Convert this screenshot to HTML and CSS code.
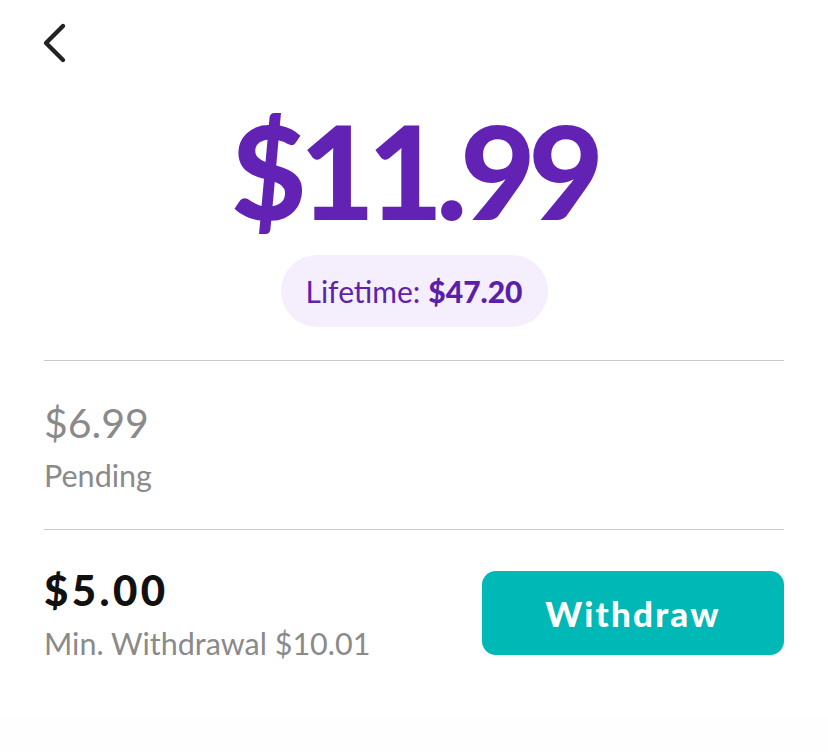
FILE: index.html
```html
<!DOCTYPE html>
<html>
<head>
<meta charset="utf-8">
<link rel="stylesheet" href="styles.css">
</head>
<body>
<div class="card">
  <div class="topbar">
    <svg class="back" width="40" height="48" viewBox="0 0 40 48">
      <path d="M23 6 L6 23 L23 40" fill="none" stroke="#222" stroke-width="4.4" stroke-linecap="round" stroke-linejoin="round"/>
    </svg>
  </div>
  <div class="balance">$11.99</div>
  <div class="pill-row">
    <div class="pill">Lifetime: <b>$47.20</b></div>
  </div>
  <div class="divider"></div>
  <div class="pending">
    <div class="pending-amount">$6.99</div>
    <div class="pending-label">Pending</div>
  </div>
  <div class="divider"></div>
  <div class="withdraw-row">
    <div class="avail">
      <div class="avail-amount">$5.00</div>
      <div class="avail-label">Min. Withdrawal $10.01</div>
    </div>
    <button class="btn">Withdraw</button>
  </div>
</div>
</body>
</html>
```
FILE: styles.css
```css
html, body {
  margin: 0;
  padding: 0;
  background: #fefefe;
}
body {
  font-family: "Lato", sans-serif;
}
.card {
  background: #fff;
  height: 716px;
  box-sizing: border-box;
  padding: 0 44px;
  box-shadow: 0 2px 4px rgba(0,0,0,0.08);
}
.topbar {
  height: 90px;
  display: flex;
  align-items: flex-start;
}
.back {
  margin-top: 20px;
  margin-left: -4px;
}
.balance {
  text-align: center;
  font-family: "Lato", sans-serif;
  font-weight: 900;
  font-size: 130px;
  line-height: 160px;
  color: #6223b5;
  letter-spacing: -7px;
  height: 165px;
}
.pill-row {
  display: flex;
  justify-content: center;
}
.pill {
  background: #f5effd;
  color: #5b24ab;
  border-radius: 36px;
  height: 72px;
  padding: 0 25px;
  display: flex;
  align-items: center;
  font-size: 30px;
  gap: 8px;
}
.pill b {
  font-weight: 900;
  color: #5a20aa;
}
.divider {
  height: 1px;
  background: #c8c8c8;
}
.pill-row + .divider {
  margin-top: 33px;
}
.pending {
  padding: 36px 0 36px;
  color: #8a8a8a;
}
.pending-amount {
  font-size: 41px;
  line-height: 52px;
}
.pending-label {
  font-size: 30.5px;
  line-height: 36px;
  margin-top: 8px;
}
.withdraw-row {
  display: flex;
  justify-content: space-between;
  align-items: center;
  padding-top: 35px;
}
.avail-amount {
  font-weight: 900;
  font-size: 42px;
  line-height: 50px;
  letter-spacing: 3.4px;
  color: #111;
}
.avail-label {
  font-size: 30.5px;
  line-height: 36px;
  color: #8a8a8a;
  margin-top: 10px;
}
.btn {
  width: 302px;
  height: 84px;
  border: none;
  border-radius: 14px;
  background: #00b8b5;
  color: #fff;
  font-family: "Lato", sans-serif;
  font-weight: 900;
  font-size: 35px;
  letter-spacing: 2.2px;
  padding: 0;
}
```
